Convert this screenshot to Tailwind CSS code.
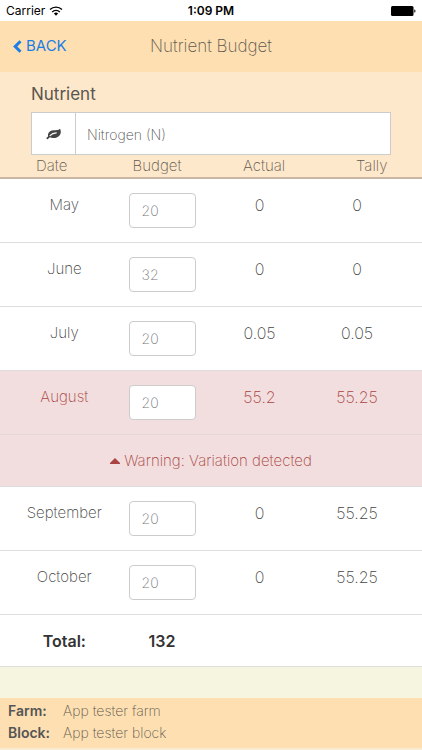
<!DOCTYPE html>
<html lang="en">
<head>
  <meta charset="UTF-8">
  <meta name="viewport" content="width=device-width, initial-scale=1.0">
  <title>Nutrient Budget</title>
  <script src="https://cdn.jsdelivr.net/npm/@tailwindcss/browser@4"></script>
</head>
<body class="min-h-screen flex flex-col bg-[#f5f5e0] font-['Inter','Liberation_Sans',sans-serif] font-extralight text-base text-[#444444]">

  <!-- Status bar -->
  <div class="grid grid-cols-3 items-center h-[21px] px-1.5 bg-white text-black text-xs font-normal">
    <div class="flex items-center gap-1">
      <span>Carrier</span>
      <svg class="w-[14px] h-[10px]" viewBox="0 0 14 10" fill="none" stroke="#000" stroke-width="1.4">
        <path d="M1 3.6a8.6 8.6 0 0 1 12 0"/>
        <path d="M3.2 5.9a5.4 5.4 0 0 1 7.6 0"/>
        <path d="M7 9.8 4.9 7.6a3 3 0 0 1 4.2 0z" fill="#000" stroke="none"/>
      </svg>
    </div>
    <span class="text-center font-semibold">1:09 PM</span>
    <svg class="justify-self-end w-[25px] h-[10px]" viewBox="0 0 25 10">
      <rect x="0" y="0" width="22.5" height="10" rx="1.5"/>
      <path d="M23.3 3.2c1.6.4 1.6 3.2 0 3.6z"/>
    </svg>
  </div>

  <!-- Nav bar -->
  <header class="grid grid-cols-[1fr_auto_1fr] items-center h-[51px] px-3 bg-[#fddfb2]">
    <button type="button" class="flex items-center gap-1 justify-self-start text-[15px] font-normal text-[#1b7ee6]">
      <svg class="w-[10px] h-[13px]" viewBox="0 0 10 13" fill="none" stroke="currentColor" stroke-width="3">
        <path d="M8.5 1.2 3.2 6.5 8.5 11.8"/>
      </svg>
      BACK
    </button>
    <h1 class="text-[17px] text-[#5f594f]">Nutrient Budget</h1>
  </header>

  <!-- Nutrient picker -->
  <section class="px-[31px] pt-2 bg-[#fee8cb]">
    <label for="nutrient" class="block h-8 text-[17px] leading-7 font-normal text-[#5a5550]">Nutrient</label>
    <div class="flex h-[43px] border border-[#cccccc] bg-white">
      <span class="flex items-center justify-center w-11 border-r border-[#cccccc]">
        <svg class="w-[15px] h-3" viewBox="0 0 16 12">
          <path d="M15 .3c1.3 2.5 1 5.6-.9 7.6-2 2.2-5.1 2.9-8.1 2.2-1.2-.3-2-.5-2.7-.1-.7.5-.9 1.5-1.7 1.5-.8 0-1.3-.8-1-1.4.3-.7 1.4-1.2 1.6-1.8.1-.5-.3-1.2 0-2.3C2.9 3.300 5.300 2.100 8.200 1.900c2.500-.1 4.900.1 6.800-1.600z" fill="#444"/>
          <path d="M4.300 7.700C5.900 5.900 8 4.900 11 4.800" fill="none" stroke="#fff" stroke-width="1.1" stroke-linecap="round"/>
        </svg>
      </span>
      <select id="nutrient" class="flex-1 appearance-none px-[11px] pt-0.5 text-sm font-extralight text-[#555555] bg-white">
        <option>Nitrogen (N)</option>
      </select>
    </div>
  </section>

  <!-- Monthly budget -->
  <table class="w-full table-fixed bg-white text-center">
    <colgroup>
      <col class="w-[30%]">
      <col class="w-[20%]">
      <col class="w-[23%]">
      <col class="w-[27%]">
    </colgroup>
    <thead class="bg-[#fee8cb] text-left text-[15px] leading-[22px] text-[#5f594f]">
      <tr class="border-b-2 border-[#c9b6a3]">
        <th scope="col" class="pl-9 font-extralight">Date</th>
        <th scope="col" class="pl-1.5 font-extralight">Budget</th>
        <th scope="col" class="pl-8 font-extralight">Actual</th>
        <th scope="col" class="pl-12 font-extralight">Tally</th>
      </tr>
    </thead>
    <tbody class="align-top leading-6">
      <tr class="h-16 border-b border-[#dddddd]">
        <td class="pt-3.5 pl-0.5 text-[15px]"><label for="may">May</label></td>
        <td class="pt-3.5 pl-0.5 text-left"><input id="may" type="text" value="20" class="w-[67px] h-[35px] px-3 border border-[#cccccc] rounded bg-white text-sm text-[#777777]"></td>
        <td class="pt-3.5">0</td>
        <td class="pt-3.5 pr-4">0</td>
      </tr>
      <tr class="h-16 border-b border-[#dddddd]">
        <td class="pt-3.5 pl-0.5 text-[15px]"><label for="june">June</label></td>
        <td class="pt-3.5 pl-0.5 text-left"><input id="june" type="text" value="32" class="w-[67px] h-[35px] px-3 border border-[#cccccc] rounded bg-white text-sm text-[#777777]"></td>
        <td class="pt-3.5">0</td>
        <td class="pt-3.5 pr-4">0</td>
      </tr>
      <tr class="h-16 border-b border-[#dddddd]">
        <td class="pt-3.5 pl-0.5 text-[15px]"><label for="july">July</label></td>
        <td class="pt-3.5 pl-0.5 text-left"><input id="july" type="text" value="20" class="w-[67px] h-[35px] px-3 border border-[#cccccc] rounded bg-white text-sm text-[#777777]"></td>
        <td class="pt-3.5">0.05</td>
        <td class="pt-3.5 pr-4">0.05</td>
      </tr>
      <tr class="h-16 border-b border-[#e3d6d7] bg-[#f2dede] text-[#a94442]">
        <td class="pt-3.5 pl-0.5 text-[15px]"><label for="august">August</label></td>
        <td class="pt-3.5 pl-0.5 text-left"><input id="august" type="text" value="20" class="w-[67px] h-[35px] px-3 border border-[#cccccc] rounded bg-white text-sm text-[#777777]"></td>
        <td class="pt-3.5">55.2</td>
        <td class="pt-3.5 pr-4">55.25</td>
      </tr>
      <tr class="h-13 border-b border-[#dddddd] bg-[#f2dede] text-[#a94442]">
        <td colspan="4" class="pt-3.5 text-[15px]">
          <div class="flex items-center justify-center gap-1">
            <svg class="w-[10px] h-[6px]" viewBox="0 0 10 6"><path d="M5 0 10 5v1H0V5z" fill="#a94442"/></svg>
            Warning: Variation detected
          </div>
        </td>
      </tr>
      <tr class="h-16 border-b border-[#dddddd]">
        <td class="pt-3.5 pl-0.5 text-[15px]"><label for="september">September</label></td>
        <td class="pt-3.5 pl-0.5 text-left"><input id="september" type="text" value="20" class="w-[67px] h-[35px] px-3 border border-[#cccccc] rounded bg-white text-sm text-[#777777]"></td>
        <td class="pt-3.5">0</td>
        <td class="pt-3.5 pr-4">55.25</td>
      </tr>
      <tr class="h-16 border-b border-[#dddddd]">
        <td class="pt-3.5 pl-0.5 text-[15px]"><label for="october">October</label></td>
        <td class="pt-3.5 pl-0.5 text-left"><input id="october" type="text" value="20" class="w-[67px] h-[35px] px-3 border border-[#cccccc] rounded bg-white text-sm text-[#777777]"></td>
        <td class="pt-3.5">0</td>
        <td class="pt-3.5 pr-4">55.25</td>
      </tr>
    </tbody>
    <tfoot class="align-top leading-6 text-[#333333]">
      <tr class="h-13 border-b border-[#dddddd]">
        <th scope="row" class="pt-3.5 pl-0.5 font-semibold">Total:</th>
        <td class="pt-3.5 pl-[22px] text-left font-semibold">132</td>
        <td></td>
        <td></td>
      </tr>
    </tfoot>
  </table>

  <!-- Farm details -->
  <footer class="mt-auto px-2 pt-0.5 pb-1 bg-[#fddfb2] border-b-2 border-[#f8ecd5] text-sm leading-[22px]">
    <dl class="grid grid-cols-[55px_1fr]">
      <dt class="font-semibold text-[#555555]">Farm:</dt>
      <dd class="text-[#5f594f]">App tester farm</dd>
      <dt class="font-semibold text-[#555555]">Block:</dt>
      <dd class="text-[#5f594f]">App tester block</dd>
    </dl>
  </footer>

</body>
</html>
